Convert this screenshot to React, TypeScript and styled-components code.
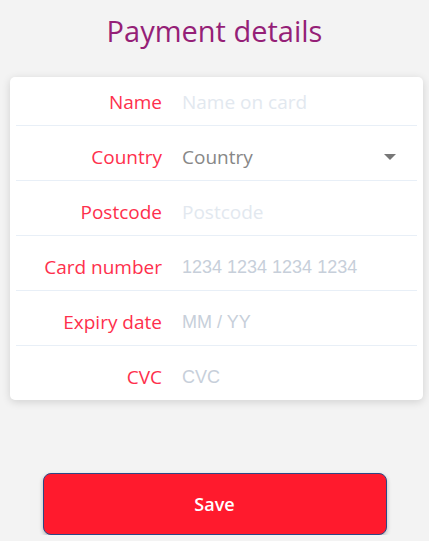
import styled, { createGlobalStyle } from "styled-components";

const GlobalStyle = createGlobalStyle`
    body {
        margin: 0;
        background: #f3f3f3;
        font-family: "Open Sans", Lato, sans-serif;
    }
`;

const Page = styled.div`
    display: flex;
    flex-direction: column;
    padding-top: 13px;
`;
const Title = styled.h1`
    margin: 0;
    text-align: center;
    font-size: 29px;
    line-height: 35px;
    font-weight: 400;
    color: #951f77;
`;
const Card = styled.div`
    margin: 29px 6px 0 10px;
    padding-top: 2px;
    background: #fff;
    border-radius: 5px;
    box-shadow: 0 2px 8px rgba(0, 0, 0, 0.14);
`;
const Field = styled.label<{ $last?: boolean }>`
    display: flex;
    align-items: center;
    gap: 20px;
    height: 46px;
    margin: 0 6px;
    border-bottom: ${(p) => (p.$last ? "none" : "1px solid #e8eff7")};
    & + & {
        margin-top: 8px;
    }
`;
const Label = styled.span`
    width: 146px;
    flex-shrink: 0;
    text-align: right;
    font-size: 19px;
    color: #fe2f4c;
`;
const Input = styled.input<{ $faint?: boolean }>`
    flex: 1;
    min-width: 0;
    border: none;
    outline: none;
    padding: 0;
    background: transparent;
    font-family: ${(p) => (p.$faint ? "inherit" : "'Liberation Sans', Arial, sans-serif")};
    font-size: ${(p) => (p.$faint ? "19px" : "18px")};
    color: #333;
    &::placeholder {
        color: ${(p) => (p.$faint ? "#e2e8ef" : "#c7cfda")};
    }
`;
const SelectBox = styled.div`
    flex: 1;
    display: flex;
    align-items: center;
    justify-content: space-between;
    padding-right: 21px;
    font-size: 19px;
    color: #878787;
`;
const SaveButton = styled.button`
    margin: 73px auto 0;
    width: 344px;
    height: 62px;
    border: 1.5px solid #2c4785;
    border-radius: 8px;
    background: #ff1a2d;
    color: #fff;
    font-family: "Open Sans", sans-serif;
    font-size: 18px;
    font-weight: 600;
    box-shadow: 0 2px 4px rgba(0, 0, 0, 0.25);
`;

function Caret() {
    return (
        <svg width="12" height="6" viewBox="0 0 12 6">
            <path d="M0 0h12L6 6z" fill="#777" />
        </svg>
    );
}

const fields = [
    { label: "Name", placeholder: "Name on card", faint: true },
    { label: "Postcode", placeholder: "Postcode", faint: true },
    { label: "Card number", placeholder: "1234 1234 1234 1234" },
    { label: "Expiry date", placeholder: "MM / YY" },
    { label: "CVC", placeholder: "CVC" },
];

export default function App() {
    return (
        <Page>
            <GlobalStyle />
            <Title>Payment details</Title>
            <Card>
                <Field>
                    <Label>{fields[0].label}</Label>
                    <Input placeholder={fields[0].placeholder} $faint />
                </Field>
                <Field>
                    <Label>Country</Label>
                    <SelectBox>
                        Country
                        <Caret />
                    </SelectBox>
                </Field>
                {fields.slice(1).map((f, i) => (
                    <Field key={f.label} $last={i === fields.length - 2}>
                        <Label>{f.label}</Label>
                        <Input placeholder={f.placeholder} $faint={f.faint} />
                    </Field>
                ))}
            </Card>
            <SaveButton>Save</SaveButton>
        </Page>
    );
}
